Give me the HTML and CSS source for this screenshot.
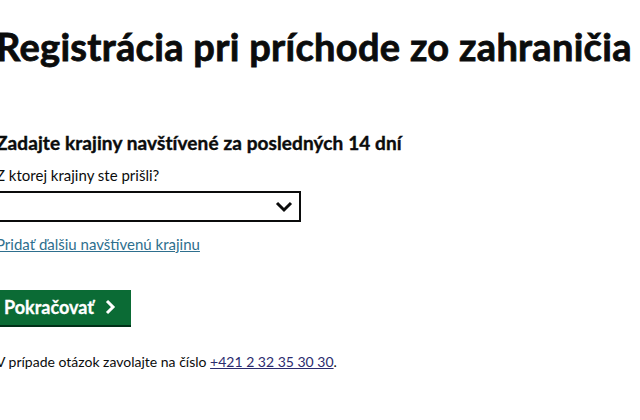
FILE: index.html
```html
<!DOCTYPE html>
<html lang="sk">
<head>
    <meta charset="UTF-8">
    <meta name="viewport" content="width=device-width, initial-scale=1.0">
    <title>Registrácia pri príchode zo zahraničia</title>
    <link rel="stylesheet" href="styles.css">
</head>
<body>
    <div class="container">
        <h1>Registrácia pri príchode zo zahraničia</h1>

        <form id="countryForm">
            <h2>Zadajte krajiny navštívené za posledných 14 dní</h2>
            <label for="countryInput">Z ktorej krajiny ste prišli?</label>
            <div class="select-wrap">
                <select id="countryInput">
                    <option value=""></option>
                </select>
                <svg class="chevron" width="18" height="12" viewBox="0 0 18 12">
                    <path d="M2 2 L9 9 L16 2" fill="none" stroke="#0b0c0c" stroke-width="3"/>
                </svg>
            </div>
            <a href="#" class="add-link">Pridať ďalšiu navštívenú krajinu</a>
            <button type="submit" class="next">Pokračovať
                <svg width="12" height="16" viewBox="0 0 12 16">
                    <path d="M3 2 L9 8 L3 14" fill="none" stroke="#fff" stroke-width="3"/>
                </svg>
            </button>
        </form>

        <p class="help">V prípade otázok zavolajte na číslo <a href="#">+421 2 32 35 30 30</a>.</p>
    </div>
</body>
</html>
```

FILE: styles.css
```css
body {
    font-family: Lato, "Noto Sans", sans-serif;
    color: #0b0c0c;
    background: #fff;
    margin: 0;
    padding: 0;
}

.container {
    margin-left: -4px;
    padding-top: 24px;
}

h1 {
    font-size: 38px;
    font-weight: 700;
    letter-spacing: 0.3px;
    -webkit-text-stroke: 0.8px #0b0c0c;
    margin: 0 0 61px 0;
    line-height: 1.2;
}

form {
    display: flex;
    flex-direction: column;
    align-items: flex-start;
}

h2 {
    font-size: 19px;
    font-weight: 700;
    letter-spacing: 0.1px;
    -webkit-text-stroke: 0.4px #0b0c0c;
    margin: 0 0 12px 0;
}

label {
    font-size: 15px;
    margin-bottom: 7px;
}

.select-wrap {
    position: relative;
    width: 305px;
}

select {
    width: 100%;
    height: 31px;
    border: 2px solid #0b0c0c;
    border-radius: 0;
    background: #fff;
    appearance: none;
}

.chevron {
    position: absolute;
    right: 8px;
    top: 10px;
}

.add-link {
    font-size: 15px;
    color: #2e6f8e;
    margin-top: 13px;
}

.next {
    margin-top: 37px;
    display: flex;
    align-items: center;
    gap: 10px;
    font-family: inherit;
    font-size: 18px;
    font-weight: 700;
    -webkit-text-stroke: 0.3px #fff;
    color: #fff;
    background: #0b6b35;
    border: none;
    box-shadow: 0 2px 0 #003018;
    padding: 6px 15px 7px 8px;
    cursor: pointer;
}

.help {
    font-size: 14px;
    margin-top: 28px;
}

.help a {
    color: #2b2b6e;
}
```
